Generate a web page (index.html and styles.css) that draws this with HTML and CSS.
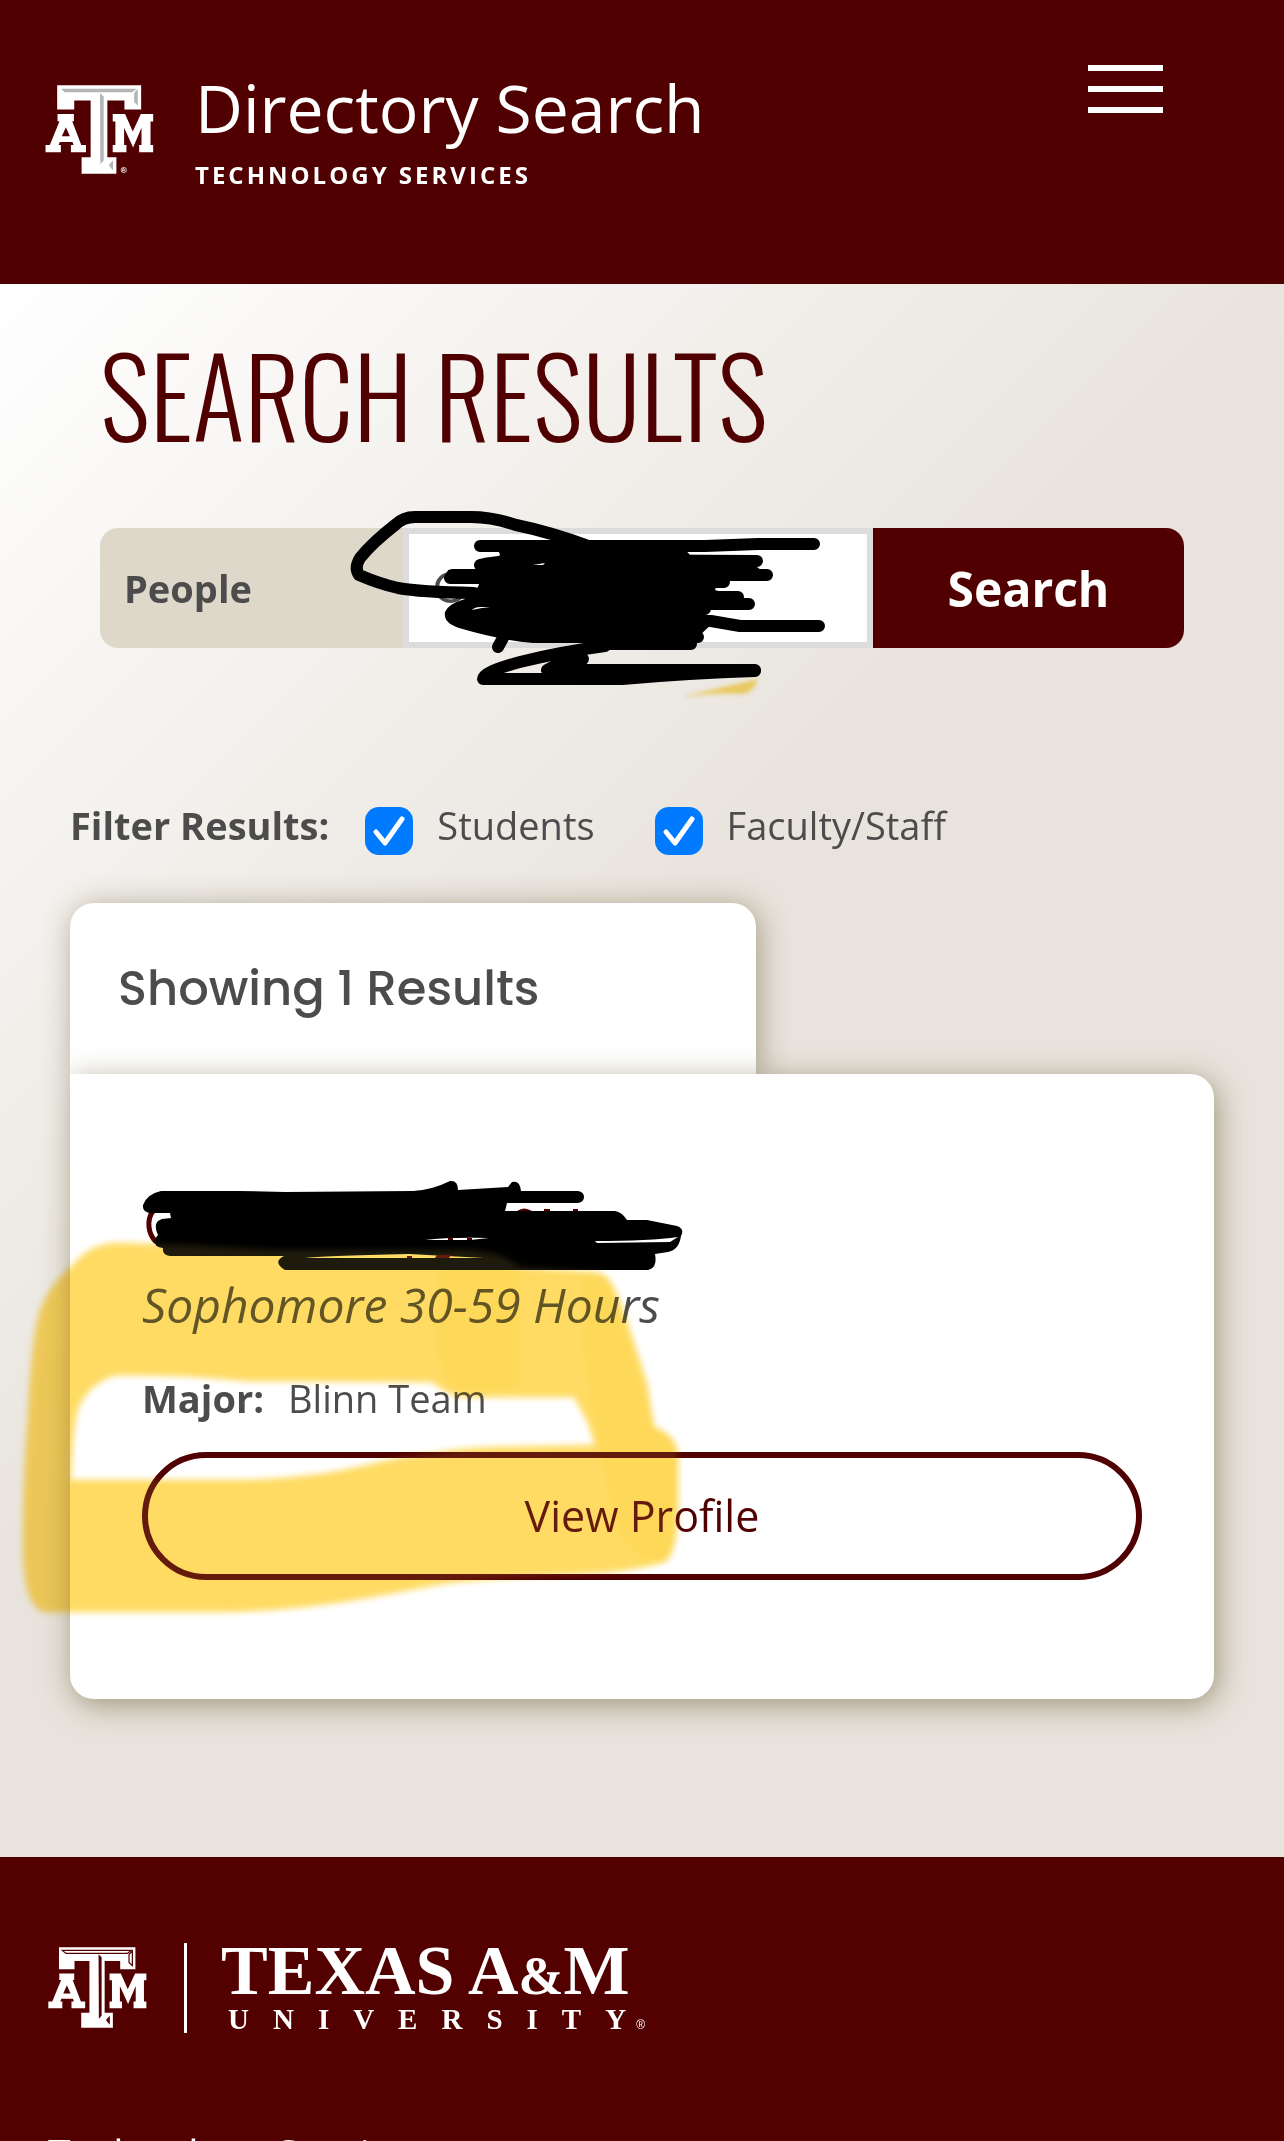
FILE: index.html
```html
<!DOCTYPE html>
<html lang="en">
<head>
<meta charset="utf-8">
<meta name="viewport" content="width=device-width, initial-scale=1">
<title>Directory Search</title>
<link rel="stylesheet" href="styles.css">
</head>
<body>
<svg class="defs" aria-hidden="true">
  <symbol id="atm" viewBox="45 44 325 266">
    <path fill="#fff" d="M81 45H332V117H282V90H231V260H258V309H154V260H181V90H132V117H81Z"/>
    <path fill="#fff" fill-rule="evenodd" d="M82 131H131V152H126L153 223H167V245H122V223H130L127 214H89L85 223H92V245H46V223H59L88 152H82ZM107 170L95 197H119Z"/>
    <path fill="#fff" d="M247 131H284L307 183L331 131H368V153H360V223H368V245H326V223H333V172L308 231L281 172V223H288V245H247V223H255V153H247Z"/>
  </symbol>
</svg>

<header class="site-header">
  <a class="brand" href="#">
    <svg class="brand-logo" viewBox="45 44 325 266" role="img" aria-label="Texas A&amp;M">
      <use href="#atm" x="45" y="44" width="325" height="266"/>
      <path fill="#b4b5b8" d="M92 55H319L305 66H104ZM322 56V105L311 95V68ZM209 68L220 78V270L210 280ZM248 270V299L237 287V281Z"/>
      <g fill="none" stroke="#fff"><circle cx="280" cy="298" r="8" stroke-width="2"/><path stroke-width="2.500" d="M277 303V294H281Q285 297 281 299H277M281 299L284 303"/></g>
    </svg>
    <span class="brand-text">
      <span class="brand-title">Directory Search</span>
      <span class="brand-sub">TECHNOLOGY SERVICES</span>
    </span>
  </a>
  <button class="menu" type="button" aria-label="Menu"><i></i><i></i><i></i></button>
</header>

<main class="main">
  <h1 class="page-title">SEARCH RESULTS</h1>

  <form class="search">
    <select class="search-type" aria-label="Search type"><option>People</option></select>
    <input class="search-input" type="text" value="C" aria-label="Search term">
    <button class="search-button" type="button">Search</button>
    <svg class="ink" viewBox="100 528 1084 120" preserveAspectRatio="xMinYMin meet" aria-hidden="true">
      <path class="wedge" d="M681 697Q720 688 758 679Q754 692 743 694Q715 692 681 697Z"/>
      <g class="pen">
        <path d="M588 546Q550 532 516 525Q492 517 471 517H415Q403 517 395 525Q372 543 360 558Q354 568 359 575Q380 584 398 588Q420 592 474 593"/>
        <path d="M480 546H705L758 544H814"/>
        <path d="M480 565Q500 560 545 560L757 561"/>
        <path d="M452 575H767M450 578H500M600 582H724M600 597H738M600 604H749M600 609H705"/>
        <path d="M517 628L600 621H711L740 626H819M600 637H698M600 644H691"/>
        <path d="M503 638L498 647"/>
        <path d="M605 646Q560 652 520 662Q483 672 483 679H622Q690 673 755 671"/>
        <path d="M583 659L560 663L547 670H755"/>
      </g>
      <path d="M495 541H588L681 545L690 555L757 555V567L765 573L719 580L715 590L738 597L748 604L705 610L684 616L715 621L698 637L691 649H636L588 643H533Q500 640 459 628Q443 623 445 612Q448 604 465 599L478 587L482 575H448V570H480L500 555Z"/>
      <path d="M547 665L755 667V674L690 677L622 684H545Z"/>
      <path fill="#fff" d="M472 610Q475 607 480 607H490Q480 608 472 610ZM533 565L545 563L543 565Z"/>
    </svg>
  </form>

  <div class="filters">
    <strong class="filters-label">Filter Results:</strong>
    <label class="check"><input type="checkbox" checked><span>Students</span></label>
    <label class="check"><input type="checkbox" checked><span>Faculty/Staff</span></label>
  </div>

  <section class="results">
    <h2 class="results-tab">Showing 1 Results</h2>
    <article class="card">
      <div class="card-name"></div>
      <p class="card-class">Sophomore 30-59 Hours</p>
      <p class="card-major"><strong>Major:</strong><span>Blinn Team</span></p>
      <a class="profile" href="#">View Profile</a>
      <svg class="ink ink-multiply" viewBox="70 1074 1144 625" preserveAspectRatio="xMinYMin meet" aria-hidden="true">
        <path class="name-rest" d="M153 1211Q148 1218 149 1227Q150 1236 156 1242"/>
        <path fill="#500000" d="M517 1211Q524 1206 532 1211ZM544 1209H550V1212H544ZM573 1209H578V1212H573Z"/>
        <path d="M143 1205Q147 1194 161 1191H239L285 1192L413 1191Q432 1190 450 1181Q458 1180 458 1190L508 1187L512 1182Q520 1180 521 1191H578Q584 1192 584 1197T578 1203H507L505 1211H615Q622 1212 627 1220H647L677 1226Q685 1229 681 1236Q679 1250 668 1252L655 1254Q658 1270 645 1270H285Q272 1262 284 1256H170Q162 1255 163 1248Q154 1247 154 1240L158 1235Q152 1222 162 1219L171 1218L170 1213H152Q142 1213 143 1205Z"/>
        <path fill="#fff" d="M595 1241Q650 1241 678 1237L670 1242L597 1243ZM425 1240Q450 1237 489 1238L470 1240ZM305 1258Q320 1256 409 1254L484 1258Z"/>
        <path fill="#500000" d="M448 1238H453V1240H448ZM467 1238H472V1240H467ZM407 1256H412V1258H407ZM437 1255H451L449 1258H435Z"/>
        <g class="marker">
          <path id="loop" fill-rule="evenodd" d="M23 1543Q23 1480 28 1417Q31 1350 37 1323Q43 1290 73 1265Q90 1243 119 1243L184 1245L275 1250H459Q500 1250 519 1267L592 1272Q605 1272 611 1283Q622 1303 629 1327L647 1383L654 1427Q676 1435 678 1455V1500Q678 1560 661 1563Q630 1571 597 1573L505 1578Q460 1581 436 1585L367 1598Q300 1610 230 1612H46Q23 1610 23 1543ZM71 1480H239Q267 1480 294 1477Q330 1474 367 1465Q400 1457 436 1453Q460 1448 496 1447L595 1445L588 1423L574 1397H460Q448 1395 432 1382L248 1381L184 1376L119 1375Q107 1376 96 1385Q80 1397 76 1417Q72 1440 71 1480Z"/>
          <path class="overlap" d="M440 1255Q505 1250 520 1275V1380Q515 1394 470 1392Q438 1385 437 1340ZM583 1275Q605 1272 611 1283L654 1427Q676 1435 678 1455V1500Q678 1560 661 1563Q625 1565 610 1500L583 1350Z"/>
        </g>
      </svg>
      <svg class="ink ink-tint" viewBox="70 1074 1144 625" preserveAspectRatio="xMinYMin meet" aria-hidden="true">
        <use href="#loop"/>
      </svg>
    </article>
  </section>
</main>

<footer class="site-footer">
  <a class="wordmark" href="#">
    <svg class="footer-logo" viewBox="45 44 325 266" role="img" aria-label="Texas A&amp;M">
      <use href="#atm" x="45" y="44" width="325" height="266"/>
      <path fill="none" stroke="#530000" stroke-width="4" d="M92 55H319L305 65H104ZM322 58V105L311 95V68Z"/>
      <path fill="#530000" d="M211 68L221 78V270L212 280ZM248 270V299L237 287V281Z"/>
    </svg>
    <span class="divider"></span>
    <span class="words">
      <span class="words-top">TEXAS A<small>&amp;</small>M</span>
      <span class="words-bottom"><span class="uni">UNIVERSIT</span><span class="uni-end">Y</span><span class="reg">®</span></span>
    </span>
  </a>
  <p class="footer-unit">Technology Services</p>
</footer>
</body>
</html>
```
FILE: styles.css
```css
* { box-sizing: border-box; }

body {
  margin: 0;
  height: 100vh;
  overflow: hidden;
  background: #530000;
  color: #4c4c4c;
  font-family: "Open Sans", "Noto Sans", sans-serif;
  font-size: 38px;
}

h1, h2, p { margin: 0; }
a { text-decoration: none; }
.defs { display: none; }

.site-header {
  display: flex;
  justify-content: space-between;
  align-items: flex-start;
  min-height: 284px;
  padding: 65px 121px 0 45px;
  background: #500000;
}
.brand { display: flex; color: #fff; gap: 41px; }
.brand-logo { width: 109px; height: 89px; margin-top: 20px; }
.brand-text { display: flex; flex-direction: column; gap: 8px; }
.brand-title { font-size: 66px; line-height: 84px; }
.brand-sub { font-size: 24px; line-height: 36px; font-weight: 700; letter-spacing: 3px; }
.menu {
  display: flex;
  flex-direction: column;
  gap: 15px;
  width: 75px;
  padding: 0;
  border: 0;
  background: none;
}
.menu i { height: 6px; background: #fff; }

.main {
  padding: 43px 70px 158px;
  background: linear-gradient(135deg, #fff 0, #e8e3dc 47%);
}
.page-title {
  padding-left: 30px;
  color: #500000;
  font-family: Oswald, "Roboto Condensed", sans-serif;
  font-size: 108px;
  font-weight: 300;
  line-height: 132px;
}

.search {
  position: relative;
  display: grid;
  grid-template-columns: 303fr 470fr 311fr;
  height: 120px;
  margin: 69px 30px 0;
}
.search-type {
  min-width: 0;
  padding: 0 24px;
  border: 0;
  border-radius: 18px 0 0 18px;
  appearance: none;
  background: #ded8ca;
  color: #4c4c4c;
  font: 700 38px "Open Sans", "Noto Sans", sans-serif;
}
.search-input {
  min-width: 0;
  padding: 0 24px;
  border: 6px solid #dcdcdc;
  border-radius: 0;
  background: #fff;
  color: #4c4c4c;
  font: 400 45px Poppins, sans-serif;
}
.search-button {
  border: 0;
  border-radius: 0 18px 18px 0;
  background: #500000;
  color: #fff;
  font: 700 48px "Open Sans", "Noto Sans", sans-serif;
}
.ink {
  position: absolute;
  inset: 0;
  width: 100%;
  height: 100%;
  overflow: visible;
  pointer-events: none;
}
.pen {
  fill: none;
  stroke: #000;
  stroke-width: 12px;
  stroke-linecap: round;
  stroke-linejoin: round;
}
.wedge { fill: #e9c03c; opacity: .8; filter: blur(2px); }

.filters {
  display: flex;
  margin: 147px 0 48px;
  line-height: 60px;
}
.filters-label { margin-right: 36px; }
.check { display: flex; align-items: flex-end; gap: 24px; margin-right: 60px; }
.check input {
  flex: none;
  width: 48px;
  height: 48px;
  margin: 0;
  border-radius: 14px;
  appearance: none;
  background: #007aff url('data:image/svg+xml,<svg xmlns="http://www.w3.org/2000/svg" viewBox="0 0 48 48"><path fill="none" stroke="white" stroke-width="5" stroke-linecap="round" stroke-linejoin="round" d="M11 25L20 36L37 12"/></svg>');
}

.results-tab {
  width: 60%;
  padding: 0 48px;
  border-radius: 24px 24px 0 0;
  background: #fff;
  box-shadow: 3px 3px 30px rgba(90, 75, 30, .45);
  font-family: Poppins, sans-serif;
  font-size: 48px;
  font-weight: 500;
  line-height: 171px;
}
.card {
  position: relative;
  padding: 120px 72px 119px;
  border-radius: 0 24px 24px 24px;
  background: #fff;
  box-shadow: 3px 6px 30px rgba(90, 75, 30, .5);
}
.card-name { height: 68px; margin-bottom: 10px; }
.card-class { font-size: 48px; font-style: italic; line-height: 66px; }
.card-major { display: flex; gap: 24px; margin: 33px 0 27px; line-height: 54px; }
.profile {
  display: block;
  border: 6px solid #500000;
  border-radius: 64px;
  color: #500000;
  font-size: 43px;
  line-height: 116px;
  text-align: center;
}
.name-rest { fill: none; stroke: #500000; stroke-width: 5px; }
.marker { fill: #ffdb63; mix-blend-mode: multiply; filter: blur(3px); }
.overlap { fill: #fed650; opacity: .6; }
.ink-multiply { mix-blend-mode: multiply; }
.ink-tint { fill: #ffdb63; opacity: .12; filter: blur(3px); }

.site-footer {
  padding: 86px 48px 60px;
  background: #530000;
  color: #fff;
}
.wordmark { display: flex; color: #fff; }
.footer-logo { width: 99px; height: 81px; margin-top: 4px; }
.divider { width: 3px; height: 90px; margin: 0 34px 0 37px; background: #fff; }
.words {
  display: flex;
  flex-direction: column;
  font-family: "Liberation Serif", "Times New Roman", serif;
  font-weight: 700;
}
.words-top { font-size: 70px; line-height: 56px; white-space: nowrap; }
.words-top small { font-size: 54px; }
.words-bottom { display: flex; align-items: baseline; padding-left: 7px; font-size: 29px; line-height: 30px; }
.uni { letter-spacing: 24px; }
.reg { font: 400 12px "Liberation Sans", sans-serif; margin-left: 10px; }
.footer-unit { margin-top: 91px; font-size: 41px; line-height: 56px; }
```
